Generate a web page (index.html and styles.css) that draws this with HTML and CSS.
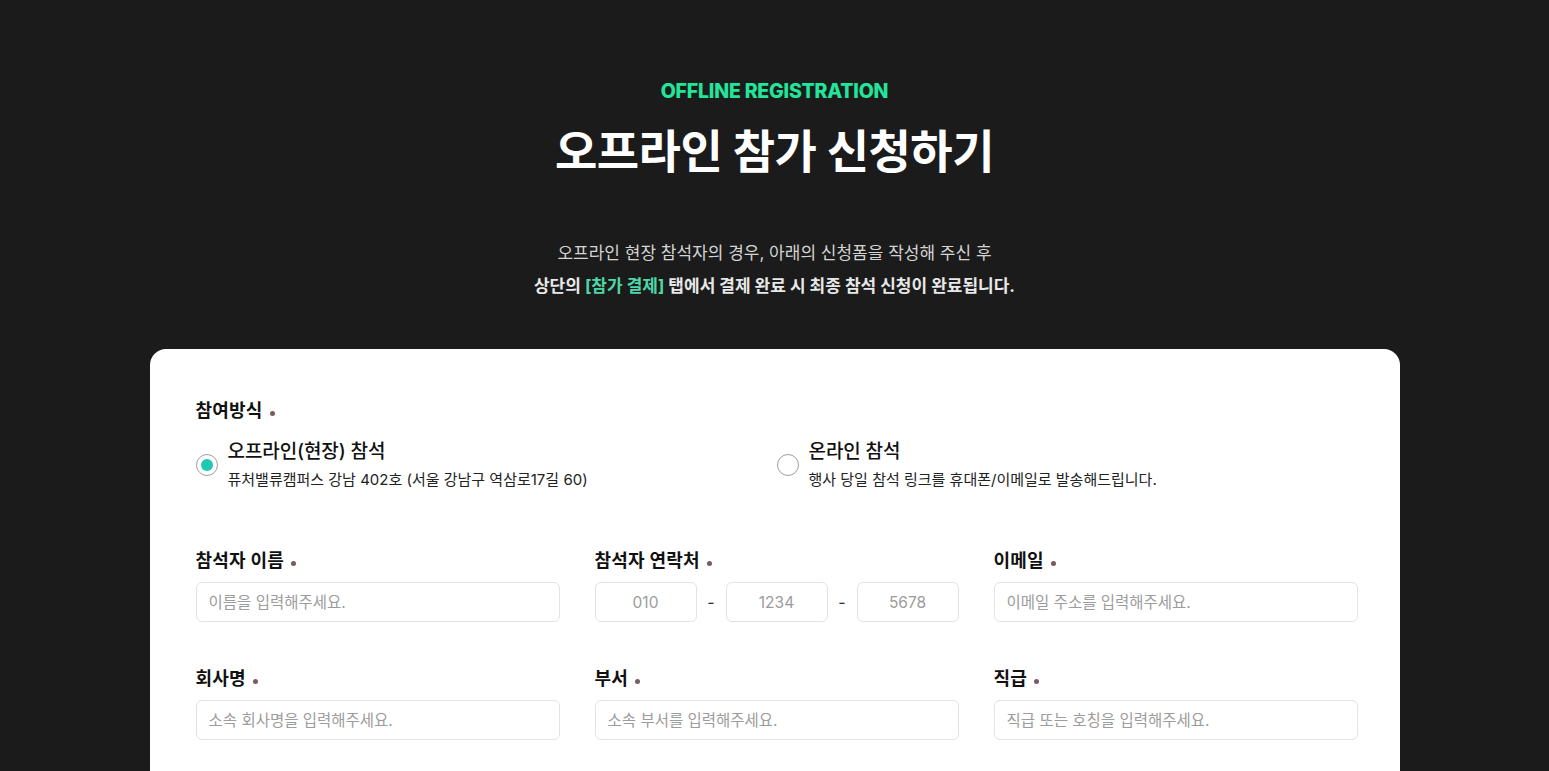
FILE: index.html
```html
<!DOCTYPE html>
<html lang="ko">
<head>
<meta charset="utf-8">
<title>오프라인 참가 신청하기</title>
<link rel="stylesheet" href="styles.css">
</head>
<body>
<main class="page">
  <header class="hero">
    <p class="eyebrow">OFFLINE REGISTRATION</p>
    <h1 class="title">오프라인 참가 신청하기</h1>
    <div class="desc-block">
      <p class="desc">오프라인 현장 참석자의 경우, 아래의 신청폼을 작성해 주신 후</p>
      <p class="desc desc-strong">상단의 <span class="accent">[참가 결제]</span> 탭에서 결제 완료 시 최종 참석 신청이 완료됩니다.</p>
    </div>
  </header>

  <section class="card">
    <div class="label">참여방식<span class="dot"></span></div>
    <div class="radios">
      <label class="radio-opt">
        <span class="radio checked"></span>
        <span class="radio-text">
          <span class="radio-title">오프라인(현장) 참석</span>
          <span class="radio-sub">퓨처밸류캠퍼스 강남 402호 (서울 강남구 역삼로17길 60)</span>
        </span>
      </label>
      <label class="radio-opt">
        <span class="radio"></span>
        <span class="radio-text">
          <span class="radio-title">온라인 참석</span>
          <span class="radio-sub">행사 당일 참석 링크를 휴대폰/이메일로 발송해드립니다.</span>
        </span>
      </label>
    </div>

    <div class="grid">
      <div class="field">
        <div class="label">참석자 이름<span class="dot"></span></div>
        <input class="input" type="text" placeholder="이름을 입력해주세요.">
      </div>
      <div class="field">
        <div class="label">참석자 연락처<span class="dot"></span></div>
        <div class="phone">
          <input class="input center" type="text" placeholder="010">
          <span class="dash">-</span>
          <input class="input center" type="text" placeholder="1234">
          <span class="dash">-</span>
          <input class="input center" type="text" placeholder="5678">
        </div>
      </div>
      <div class="field">
        <div class="label">이메일<span class="dot"></span></div>
        <input class="input" type="text" placeholder="이메일 주소를 입력해주세요.">
      </div>
      <div class="field">
        <div class="label">회사명<span class="dot"></span></div>
        <input class="input" type="text" placeholder="소속 회사명을 입력해주세요.">
      </div>
      <div class="field">
        <div class="label">부서<span class="dot"></span></div>
        <input class="input" type="text" placeholder="소속 부서를 입력해주세요.">
      </div>
      <div class="field">
        <div class="label">직급<span class="dot"></span></div>
        <input class="input" type="text" placeholder="직급 또는 호칭을 입력해주세요.">
      </div>
    </div>
  </section>
</main>
</body>
</html>
```

FILE: styles.css
```css
* { box-sizing: border-box; }

html, body {
  margin: 0;
  padding: 0;
  background: #1b1b1b;
  font-family: Inter, "Noto Sans CJK KR", sans-serif;
}

.page {
  display: flex;
  flex-direction: column;
  align-items: center;
  padding-top: 79px;
}

.hero {
  text-align: center;
  display: flex;
  flex-direction: column;
  align-items: center;
}

.eyebrow {
  margin: 0;
  font-size: 19.5px;
  line-height: 24px;
  font-weight: 800;
  color: #22e59b;
  letter-spacing: -0.2px;
}

.title {
  margin: 18px 0 0;
  font-size: 46px;
  line-height: 60px;
  font-weight: 700;
  color: #ffffff;
  letter-spacing: -0.5px;
}

.desc-block {
  margin-top: 56px;
}

.desc {
  margin: 0;
  font-size: 17px;
  line-height: 33px;
  color: #d4d4d4;
  font-weight: 400;
  letter-spacing: 0;
}

.desc-strong {
  font-weight: 700;
  color: #e8e8e8;
}

.accent {
  color: #4fd6a6;
}

.card {
  margin-top: 46px;
  width: 1250px;
  background: #ffffff;
  border-radius: 16px;
  padding: 49px 42px 120px 46px;
}

.label {
  display: flex;
  align-items: center;
  font-size: 18px;
  line-height: 26px;
  font-weight: 600;
  color: #111111;
  letter-spacing: 0.2px;
}

.dot {
  width: 5px;
  height: 5px;
  border-radius: 50%;
  background: #7b5c5c;
  margin-left: 7px;
  margin-top: 4px;
}

.radios {
  margin-top: 15px;
  display: grid;
  grid-template-columns: 1fr 1fr;
}

.radio-opt {
  display: flex;
  align-items: center;
  gap: 10px;
}

.radio {
  width: 22px;
  height: 22px;
  border-radius: 50%;
  border: 1px solid #9e9e9e;
  display: flex;
  align-items: center;
  justify-content: center;
  flex: none;
}

.radio.checked::after {
  content: "";
  width: 12px;
  height: 12px;
  border-radius: 50%;
  background: #1ec9b1;
}

.radio-text {
  display: flex;
  flex-direction: column;
  gap: 4px;
}

.radio-title {
  font-size: 19px;
  line-height: 26px;
  font-weight: 500;
  color: #111111;
  letter-spacing: -0.1px;
}

.radio-sub {
  font-size: 15px;
  line-height: 22px;
  color: #222222;
  letter-spacing: 0;
}

.grid {
  margin-top: 57px;
  display: grid;
  grid-template-columns: repeat(3, 1fr);
  column-gap: 35px;
  row-gap: 44px;
}

.field {
  display: flex;
  flex-direction: column;
  gap: 8px;
}

.input {
  width: 100%;
  height: 40px;
  border: 1px solid #e3e3e3;
  border-radius: 6px;
  padding: 0 12px;
  font-family: inherit;
  font-size: 15.5px;
  color: #222;
  background: #fff;
  outline: none;
  letter-spacing: 0;
}

.input::placeholder {
  color: #9c9c9c;
}

.input.center {
  text-align: center;
}

.phone {
  display: flex;
  align-items: center;
}

.phone .input {
  width: 102px;
  flex: none;
}

.dash {
  width: 29px;
  text-align: center;
  font-size: 16px;
  color: #333;
}
```
